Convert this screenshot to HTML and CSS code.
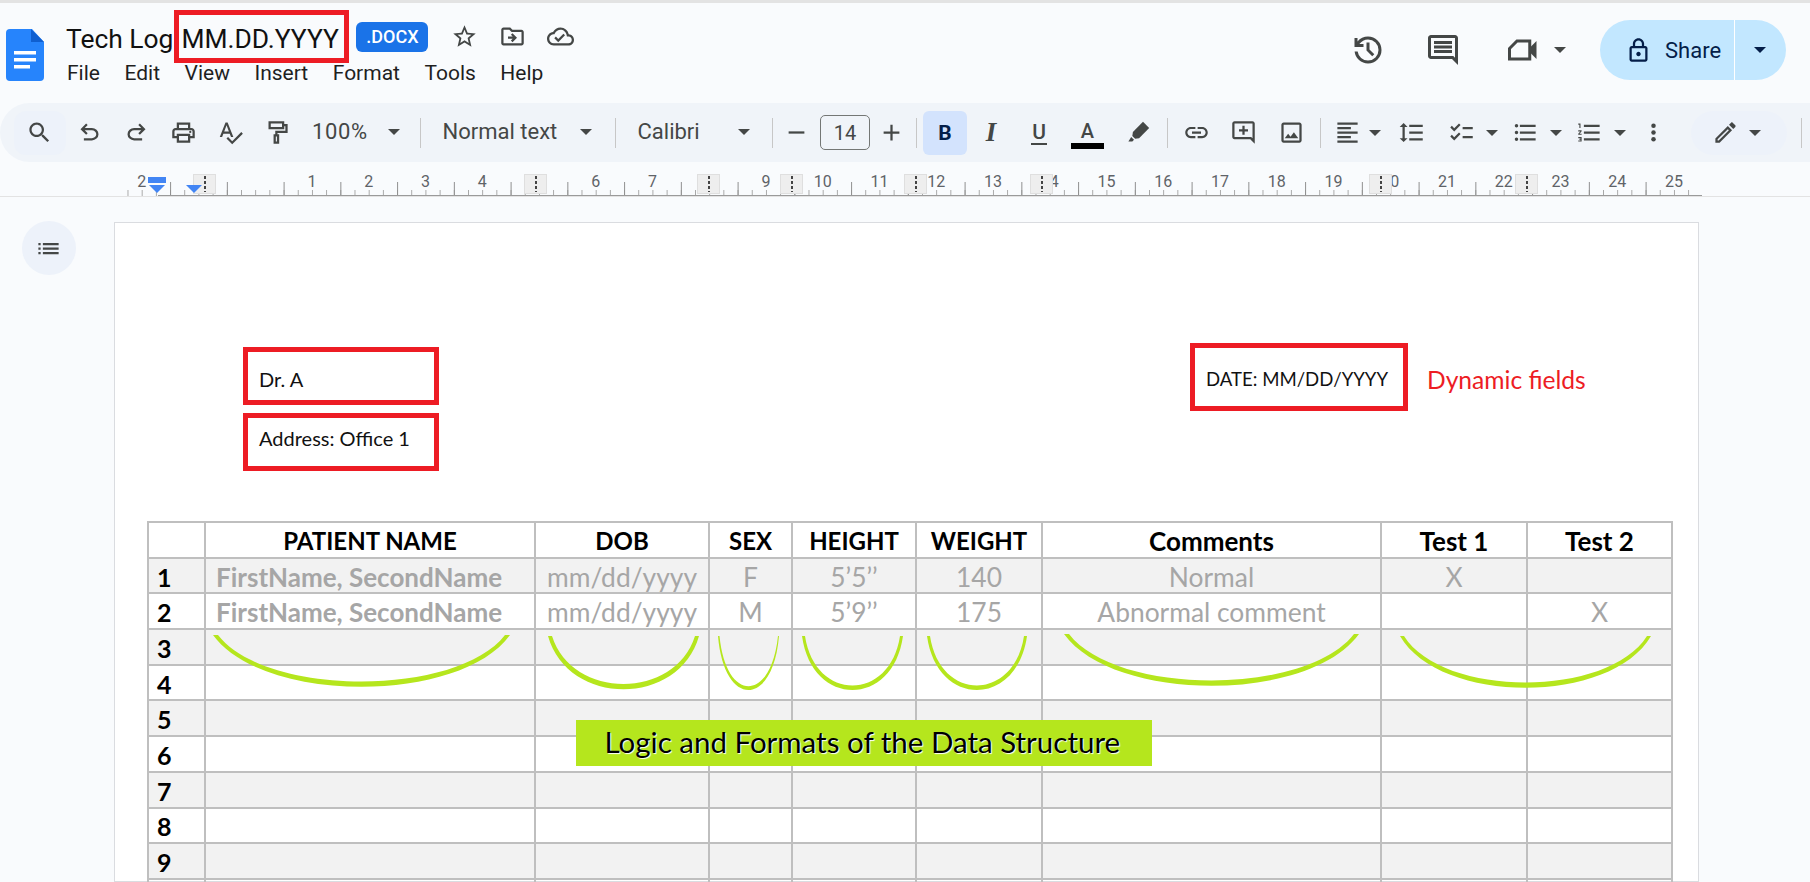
FILE: index.html
```html
<!DOCTYPE html>
<html lang="en">
<head>
<meta charset="utf-8">
<title>Tech Log MM.DD.YYYY</title>
<link rel="stylesheet" href="styles.css">
</head>
<body>
<header class="appbar">
  <svg class="logo" viewBox="0 0 38 52"><path fill="#2684fc" d="M4 0h22l12 13v35a4 4 0 0 1-4 4H4a4 4 0 0 1-4-4V4a4 4 0 0 1 4-4z"/><path fill="#0f5fd0" d="M25 0l13 13H25z"/><path fill="#fff" d="M8 22h22v3.4H8zM8 29h22v3.4H8zM8 36h16v3.4H8z"/></svg>
  <div class="titlecol">
    <div class="titlerow">
      <span class="doctitle">Tech Log</span>
      <span class="doctitle datebox">MM.DD.YYYY</span>
      <span class="badge">.DOCX</span>
      <svg class="ic star" viewBox="0 0 24 24"><path d="M22 9.24l-7.19-.62L12 2 9.19 8.63 2 9.24l5.46 4.73L5.82 21 12 17.27 18.18 21l-1.63-7.03L22 9.24zM12 15.4l-3.76 2.27 1-4.28-3.32-2.88 4.38-.38L12 6.1l1.71 4.04 4.38.38-3.32 2.88 1 4.28L12 15.4z"/></svg>
      <svg class="ic folder" viewBox="0 0 24 24"><path d="M20 6h-8l-2-2H4c-1.1 0-1.99.9-1.99 2L2 18c0 1.1.9 2 2 2h16c1.1 0 2-.9 2-2V8c0-1.1-.9-2-2-2zm0 12H4V6h5.17l2 2H20v10z"/><path d="M12.16 12H8v2h4.16l-1.58 1.59L12 17l4-4-4-4-1.41 1.41z"/></svg>
      <svg class="ic cloud" viewBox="0 0 24 24"><path d="M19.35 10.04C18.67 6.59 15.64 4 12 4 9.11 4 6.6 5.64 5.35 8.04 2.34 8.36 0 10.91 0 14c0 3.31 2.69 6 6 6h13c2.76 0 5-2.24 5-5 0-2.64-2.05-4.78-4.65-4.96zM19 18H6c-2.21 0-4-1.79-4-4 0-2.05 1.53-3.76 3.56-3.97l1.07-.11.5-.95C8.08 7.14 9.94 6 12 6c2.62 0 4.88 1.86 5.39 4.43l.3 1.5 1.53.11c1.56.1 2.78 1.41 2.78 2.96 0 1.65-1.35 3-3 3zm-9-3.82l-2.09-2.09L6.5 13.5 10 17l6.01-6.01-1.41-1.41z"/></svg>
    </div>
    <nav class="menu">
      <span>File</span><span>Edit</span><span>View</span><span>Insert</span><span>Format</span><span>Tools</span><span>Help</span>
    </nav>
  </div>
  <div class="actions">
    <svg class="ic big" viewBox="0 0 24 24"><path d="M12 21q-3.45 0-6.01-2.29Q3.43 16.43 3.08 13H5.1q.35 2.6 2.31 4.3Q9.38 19 12 19q2.92 0 4.96-2.04T19 12q0-2.92-2.04-4.96T12 5q-1.72 0-3.22.8T6.25 8H9v2H3V4h2v2.35q1.27-1.6 3.11-2.47Q9.95 3 12 3q3.75 0 6.38 2.62T21 12q0 3.75-2.62 6.38T12 21zm2.8-4.8L11 12.4V7h2v4.6l3.2 3.2z"/></svg>
    <svg class="ic big comment" viewBox="0 0 24 24"><path d="M21.99 4c0-1.1-.89-2-1.99-2H4c-1.1 0-2 .9-2 2v12c0 1.1.9 2 2 2h14l4 4-.01-18zM20 4v13.17L18.83 16H4V4h16zM6 12h12v2H6zm0-3h12v2H6zm0-3h12v2H6z"/></svg>
    <svg class="ic big video" viewBox="0 0 24 24"><path class="line" d="M8 6h8.500v12H3V11z"/><path d="M16 11l5-5v12l-5-5z"/></svg>
    <i class="caret videocaret"></i>
    <div class="share">
      <div class="sharemain">
        <svg class="ic lock" viewBox="0 0 24 24"><path d="M18 8h-1V6c0-2.76-2.24-5-5-5S7 3.24 7 6v2H6c-1.1 0-2 .9-2 2v10c0 1.1.9 2 2 2h12c1.1 0 2-.9 2-2V10c0-1.1-.9-2-2-2zM9 6c0-1.66 1.34-3 3-3s3 1.34 3 3v2H9V6zm9 14H6V10h12v10zm-6-3c1.1 0 2-.9 2-2s-.9-2-2-2-2 .9-2 2 .9 2 2 2z"/></svg>
        <span>Share</span>
      </div>
      <div class="sharedrop"><i class="caret dark"></i></div>
    </div>
  </div>
</header>

<div class="toolbar">
  <div class="cell search"><svg class="ic" viewBox="0 0 24 24"><path d="M15.5 14h-.79l-.28-.27C15.41 12.59 16 11.11 16 9.5 16 5.91 13.09 3 9.5 3S3 5.91 3 9.5 5.91 16 9.5 16c1.61 0 3.09-.59 4.23-1.57l.27.28v.79l5 4.99L20.49 19l-4.99-5zm-6 0C7.01 14 5 11.99 5 9.5S7.01 5 9.5 5 14 7.01 14 9.5 11.99 14 9.5 14z"/></svg></div>
  <div class="cell w47"><svg class="ic" viewBox="0 0 24 24"><path d="M7 19v-2h7.1q1.57 0 2.735-1T18 13.5q0-1.5-1.165-2.5T14.1 10H7.8l2.6 2.6L9 14 4 9l5-5 1.4 1.4L7.8 8h6.3q2.43 0 4.16 1.58T20 13.5q0 2.35-1.74 3.93T14.1 19z"/></svg></div>
  <div class="cell w47"><svg class="ic flip" viewBox="0 0 24 24"><path d="M7 19v-2h7.1q1.57 0 2.735-1T18 13.5q0-1.5-1.165-2.5T14.1 10H7.8l2.6 2.6L9 14 4 9l5-5 1.4 1.4L7.8 8h6.3q2.43 0 4.16 1.58T20 13.5q0 2.35-1.74 3.93T14.1 19z"/></svg></div>
  <div class="cell w47"><svg class="ic" viewBox="0 0 24 24"><path d="M19 8h-1V3H6v5H5c-1.66 0-3 1.34-3 3v6h4v4h12v-4h4v-6c0-1.66-1.34-3-3-3zM8 5h8v3H8V5zm8 12v2H8v-4h8v2zm2-2v-2H6v2H4v-4c0-.55.45-1 1-1h14c.55 0 1 .45 1 1v4h-2z"/><circle cx="18" cy="11.5" r="1"/></svg></div>
  <div class="cell w47"><svg class="ic" viewBox="0 0 24 24"><path d="M12.45 16h2.09L9.43 3H7.57L2.46 16h2.09l1.12-3h5.64l1.14 3zm-6.02-5L8.5 5.48 10.57 11H6.43zm15.16.59l-8.09 8.09L9.83 16l-1.41 1.41 5.09 5.09L23 13l-1.41-1.41z"/></svg></div>
  <div class="cell w47"><svg class="ic" viewBox="0 0 24 24"><path class="line" d="M5 3h12v5H5zM17 5.500h3v6h-9v3M9.500 14.500h3V21h-3z"/></svg></div>
  <div class="select selzoom"><span class="wide">100%</span><i class="caret"></i></div>
  <i class="sep"></i>
  <div class="select selstyle"><span>Normal text</span><i class="caret"></i></div>
  <i class="sep"></i>
  <div class="select selfont"><span>Calibri</span><i class="caret"></i></div>
  <i class="sep"></i>
  <div class="cell w47"><svg class="ic" viewBox="0 0 24 24"><path d="M5 11h14v2H5z"/></svg></div>
  <div class="sizebox">14</div>
  <div class="cell w42"><svg class="ic" viewBox="0 0 24 24"><path d="M19 13h-6v6h-2v-6H5v-2h6V5h2v6h6z"/></svg></div>
  <i class="sep sepwide"></i>
  <div class="cell bold">B</div>
  <div class="cell w48 italic">I</div>
  <div class="cell w48"><span class="under">U</span></div>
  <div class="cell w49"><span class="color">A</span></div>
  <div class="cell w52"><svg class="ic" viewBox="0 0 24 24"><path d="M16 2.500l5.500 5.500-9 9-3.500.5-2.500-2.500.5-3.500z"/><path d="M5.500 16l2.500 2.500L6.500 20H3z"/></svg></div>
  <i class="sep sepsmall"></i>
  <div class="cell w56"><svg class="ic" viewBox="0 0 24 24"><path d="M3.900 12c0-1.710 1.390-3.100 3.100-3.100h4V7H7c-2.760 0-5 2.240-5 5s2.240 5 5 5h4v-1.900H7c-1.710 0-3.100-1.390-3.100-3.100zM8 13h8v-2H8v2zm9-6h-4v1.900h4c1.710 0 3.100 1.390 3.100 3.100s-1.390 3.100-3.100 3.100h-4V17h4c2.760 0 5-2.240 5-5s-2.240-5-5-5z"/></svg></div>
  <div class="cell w38"><svg class="ic" viewBox="0 0 24 24"><path d="M22 4c0-1.100-.9-2-2-2H4c-1.100 0-2 .9-2 2v12c0 1.100.9 2 2 2h14l4 4V4zm-2 0v13.170L18.830 16H4V4h16zM13 6h-2v3H8v2h3v3h2v-3h3V9h-3z"/></svg></div>
  <div class="cell w58"><svg class="ic" viewBox="0 0 24 24"><path d="M19 5v14H5V5h14m0-2H5c-1.100 0-2 .9-2 2v14c0 1.100.9 2 2 2h14c1.100 0 2-.9 2-2V5c0-1.100-.9-2-2-2zm-4.860 8.860l-3 3.870L9 13.140 6 17h12l-3.860-5.140z"/></svg></div>
  <i class="sep"></i>
  <div class="combo tight ml12"><svg class="ic" viewBox="0 0 24 24"><path d="M15 15H3v2h12v-2zm0-8H3v2h12V7zM3 13h18v-2H3v2zm0 8h18v-2H3v2zM3 3v2h18V3H3z"/></svg><i class="caret"></i></div>
  <div class="combo ml18"><svg class="ic" viewBox="0 0 24 24"><path d="M6 7h2.500L5 3.500 1.500 7H4v10H1.500L5 20.500 8.500 17H6V7zm4-2v2h12V5H10zm0 14h12v-2H10v2zm0-6h12v-2H10v2z"/></svg></div>
  <div class="combo ml23"><svg class="ic" viewBox="0 0 24 24"><path d="M22 7h-9v2h9V7zm0 8h-9v2h9v-2zM5.540 11L2 7.460l1.410-1.410 2.120 2.120 4.240-4.240 1.410 1.410L5.540 11zm0 8L2 15.460l1.410-1.410 2.120 2.120 4.240-4.240 1.410 1.410L5.540 19z"/></svg><i class="caret"></i></div>
  <div class="combo ml14"><svg class="ic" viewBox="0 0 24 24"><path d="M4 10.500c-.83 0-1.500.67-1.500 1.500s.67 1.500 1.500 1.500 1.500-.67 1.500-1.500-.67-1.500-1.500-1.500zm0-6c-.83 0-1.500.67-1.500 1.500S3.170 7.500 4 7.500 5.500 6.830 5.500 6 4.830 4.500 4 4.500zm0 12c-.83 0-1.500.68-1.500 1.500s.68 1.500 1.500 1.500 1.500-.68 1.500-1.500-.67-1.500-1.500-1.500zM7 19h14v-2H7v2zm0-6h14v-2H7v2zm0-8v2h14V5H7z"/></svg><i class="caret"></i></div>
  <div class="combo ml14"><svg class="ic" viewBox="0 0 24 24"><path d="M2 17h2v.5H3v1h1v.5H2v1h3v-4H2v1zm1-9h1V4H2v1h1v3zm-1 3h1.800L2 13.100v.9h3v-1H3.200L5 10.900V10H2v1zm5-6v2h14V5H7zm0 14h14v-2H7v2zm0-6h14v-2H7v2z"/></svg><i class="caret"></i></div>
  <div class="combo ml14"><svg class="ic" viewBox="0 0 24 24"><circle cx="12" cy="6" r="2"/><circle cx="12" cy="12" r="2"/><circle cx="12" cy="18" r="2"/></svg></div>
  <div class="penpill"><svg class="ic" viewBox="0 0 24 24"><path d="M3 17.250V21h3.750L17.810 9.940l-3.750-3.750L3 17.250zM5.920 19H5v-.92l9.060-9.060.92.92L5.920 19zM20.710 5.630l-2.340-2.340c-.39-.39-1.020-.39-1.410 0l-1.830 1.830 3.750 3.750 1.830-1.830c.39-.39.39-1.020 0-1.410z"/></svg><i class="caret"></i></div>
  <i class="sep seplast"></i>
</div>

<div class="ruler">
  <div class="ticks"></div>
  <div class="labels">
    <span>2</span><span>1</span><span></span><span>1</span><span>2</span><span>3</span><span>4</span><span>5</span><span>6</span><span>7</span><span>8</span><span>9</span><span>10</span><span>11</span><span>12</span><span>13</span><span>14</span><span>15</span><span>16</span><span>17</span><span>18</span><span>19</span><span>20</span><span>21</span><span>22</span><span>23</span><span>24</span><span>25</span>
  </div>
  <i class="marker m1"></i><i class="marker m2"></i><i class="marker m3"></i><i class="marker m4"></i><i class="marker m5"></i><i class="marker m6"></i><i class="marker m7"></i><i class="marker m8"></i>
  <i class="indent-bar"></i>
  <i class="indent-tri tri1"></i>
  <i class="indent-tri tri2"></i>
</div>

<main class="workspace">
  <aside class="side">
    <div class="outline"><svg class="ic" viewBox="0 0 24 24"><path d="M3 7h2v2H3zM7 7h14v2H7zM3 11h2v2H3zM7 11h14v2H7zM3 15h2v2H3zM7 15h14v2H7z"/></svg></div>
  </aside>
  <section class="page">
    <div class="dochead">
      <div class="stack">
        <div class="redbox boxlow">Dr. A</div>
        <div class="redbox boxhigh">Address: Office 1</div>
      </div>
      <div class="dategroup">
        <div class="redbox datefield">DATE: MM/DD/YYYY</div>
        <div class="dynamic">Dynamic fields</div>
      </div>
    </div>
    <table class="sheet">
      <colgroup><col class="c0"><col class="c1"><col class="c2"><col class="c3"><col class="c4"><col class="c5"><col class="c6"><col class="c7"><col class="c8"></colgroup>
      <thead>
        <tr><th></th><th>PATIENT NAME</th><th>DOB</th><th>SEX</th><th>HEIGHT</th><th>WEIGHT</th><th class="mix">Comments</th><th class="mix">Test 1</th><th class="mix">Test 2</th></tr>
      </thead>
      <tbody>
        <tr><th>1</th><td class="name">FirstName, SecondName</td><td>mm/dd/yyyy</td><td>F</td><td>5’5’’</td><td>140</td><td>Normal</td><td>X</td><td></td></tr>
        <tr><th>2</th><td class="name">FirstName, SecondName</td><td>mm/dd/yyyy</td><td>M</td><td>5’9’’</td><td>175</td><td>Abnormal comment</td><td></td><td>X</td></tr>
        <tr><th>3</th><td></td><td></td><td></td><td></td><td></td><td></td><td></td><td></td></tr>
        <tr><th>4</th><td></td><td></td><td></td><td></td><td></td><td></td><td></td><td></td></tr>
        <tr><th>5</th><td></td><td></td><td></td><td></td><td></td><td></td><td></td><td></td></tr>
        <tr><th>6</th><td></td><td></td><td></td><td></td><td></td><td></td><td></td><td></td></tr>
        <tr><th>7</th><td></td><td></td><td></td><td></td><td></td><td></td><td></td><td></td></tr>
        <tr><th>8</th><td></td><td></td><td></td><td></td><td></td><td></td><td></td><td></td></tr>
        <tr><th>9</th><td></td><td></td><td></td><td></td><td></td><td></td><td></td><td></td></tr>
        <tr><th>10</th><td></td><td></td><td></td><td></td><td></td><td></td><td></td><td></td></tr>
      </tbody>
    </table>
    <svg class="arcs" viewBox="115 223 1583 659">
      <path d="M213 635C263 704 460 704 510 635H505C457 697 266 697 218 635Z"/>
      <path d="M548 636C568 707 679 707 699 636H695C675 700 572 700 552 636Z"/>
      <path d="M718 636C724 708 773 708 779 636H778C771 703 726 703 719.500 636Z"/>
      <path d="M802 636C812 708 893 708 903 636H900C890 702 815 702 805 636Z"/>
      <path d="M927 636C937 708 1017 708 1027 636H1024C1014 702 940 702 930 636Z"/>
      <path d="M1064 634C1114 703 1309 703 1359 634H1354C1306 696 1117 696 1069 634Z"/>
      <path d="M1400 636C1440 705 1611 705 1651 636H1647C1608 698 1443 698 1404 636Z"/>
    </svg>
    <div class="banner">Logic and Formats of the Data Structure</div>
  </section>
</main>
</body>
</html>
```

FILE: styles.css
```css
* { box-sizing: border-box; }
html, body { height: 100%; }
body {
  margin: 0;
  height: 882px;
  overflow: hidden;
  background: #f9fbfd;
  color: #1f1f1f;
  font-family: Roboto, "Noto Sans", sans-serif;
  display: flex;
  flex-direction: column;
  border-top: 3px solid #e3e3e3;
}
i { display: block; font-style: normal; }

.ic { width: 27px; height: 27px; fill: #444746; flex: none; display: block; }
.ic .line { fill: none; stroke: #444746; stroke-width: 2; }
.flip { transform: scaleX(-1); }
.caret {
  flex: none;
  width: 0;
  height: 0;
  border-left: 6px solid transparent;
  border-right: 6px solid transparent;
  border-top: 6px solid #444746;
}
.caret.dark { border-top-color: #041e49; }

/* App bar */
.appbar { height: 100px; flex: none; display: flex; position: relative; }
.logo { width: 38px; height: 52px; margin: 26px 0 0 6px; flex: none; }
.titlecol { margin-left: 22px; flex: none; }
.titlerow { display: flex; align-items: center; height: 53px; margin-top: 7px; }
.doctitle { font-size: 26.4px; color: #111; white-space: nowrap; padding-top: 4px; }
.datebox {
  border: 5px solid #ed1c24;
  height: 53px;
  width: 175px;
  margin-left: 1px;
  display: flex;
  align-items: center;
  padding-left: 2px;
}
.badge {
  margin-left: 7px;
  width: 72px;
  height: 30px;
  border-radius: 6px;
  background: #1a73e8;
  color: #fff;
  font-size: 18px;
  font-weight: 500;
  display: flex;
  align-items: center;
  justify-content: center;
}
.star { margin-left: 22.5px; }
.folder { margin-left: 21px; }
.cloud { margin-left: 21px; }
.menu { display: flex; gap: 24.5px; font-size: 21px; margin-top: -2px; padding-left: 1px; line-height: 24px; }
.actions { margin-left: auto; display: flex; align-items: center; height: 60px; margin-top: 17px; padding-right: 24px; }
.big { width: 36px; height: 36px; }
.comment { margin-left: 39px; }
.video { margin-left: 44px; }
.videocaret { margin-left: 13px; }
.share { display: flex; height: 60px; width: 186px; margin-left: 34px; background: #c2e7ff; border-radius: 30px; color: #041e49; font-size: 22px; }
.sharemain { width: 135px; display: flex; align-items: center; padding-left: 25px; gap: 13px; border-right: 1px solid #fff; }
.lock { fill: #041e49; }
.sharedrop { flex: 1; display: flex; align-items: center; padding-left: 19px; }

/* Toolbar */
.toolbar {
  height: 59px;
  flex: none;
  background: #f0f4f9;
  border-radius: 30px 0 0 30px;
  display: flex;
  align-items: center;
  padding-left: 14px;
  color: #444746;
}
.cell { flex: none; height: 44px; display: flex; align-items: center; justify-content: center; }
.search { width: 51.5px; background: #edf2fa; border-radius: 12px; }
.w38 { width: 38px; }
.w42 { width: 42px; }
.w47 { width: 47px; }
.w48 { width: 48px; }
.w49 { width: 49px; }
.w52 { width: 52px; }
.w56 { width: 56px; }
.w58 { width: 58px; }
.select { flex: none; display: flex; align-items: center; justify-content: space-between; font-size: 22px; line-height: 24px; padding-bottom: 2px; }
.wide { letter-spacing: 0.6px; font-size: 22px; }
.selzoom { width: 119.5px; padding-left: 11.5px; padding-right: 20px; }
.selstyle { width: 194px; padding-left: 21.5px; padding-right: 23px; }
.selfont { width: 156px; padding-left: 21.5px; padding-right: 22px; }
.sep { width: 1px; height: 30px; background: #c7c7c7; flex: none; }
.sepwide { margin: 0 6px 0 4px; }
.sepsmall { margin-left: 3px; }
.seplast { margin-left: 14px; }
.sizebox {
  flex: none;
  width: 50px;
  height: 35px;
  border: 1px solid #747775;
  border-radius: 5px;
  font-size: 20px;
  display: flex;
  align-items: center;
  justify-content: center;
}
.bold { width: 44px; background: #d3e3fd; border-radius: 6px; font-size: 21px; font-weight: 700; color: #041e49; }
.italic { font-family: "Liberation Serif", serif; font-style: italic; font-weight: 700; font-size: 27px; }
.under { font-size: 21px; font-weight: 500; border-bottom: 2px solid #444746; line-height: 22px; padding: 0 1px; }
.color { font-size: 20px; font-weight: 500; width: 33px; text-align: center; line-height: 24px; border-bottom: 6px solid #000; margin-top: 2px; }
.combo { display: flex; align-items: center; gap: 11px; flex: none; }
.combo.tight { gap: 8px; }
.ml12 { margin-left: 12.5px; }
.ml14 { margin-left: 14px; }
.ml18 { margin-left: 17.5px; }
.ml23 { margin-left: 23px; }
.penpill {
  flex: none;
  width: 96px;
  height: 44px;
  margin-left: 23.5px;
  border-radius: 22px;
  background: #edf2fa;
  display: flex;
  align-items: center;
  gap: 10px;
  padding-left: 21px;
}

/* Ruler */
.ruler { height: 35px; flex: none; position: relative; border-bottom: 1px solid #e3e3e3; }
.ticks {
  position: absolute;
  left: 115px;
  width: 1587px;
  bottom: 0;
  height: 14px;
  background-image:
    linear-gradient(to right, #8f8f8f 1px, transparent 1px),
    linear-gradient(to right, #a6a6a6 1px, transparent 1px);
  background-size: 56.75px 14px, 14.19px 6px;
  background-position: 55.1px bottom, 12.5px bottom;
  background-repeat: repeat-x;
}
.ticks::after { content: ""; position: absolute; left: 43px; right: 0; bottom: 0; height: 1px; background: #9a9a9a; }
.labels { display: flex; padding-left: 113.4px; font-size: 16px; color: #5f6368; line-height: 40px; height: 34px; position: relative; }
.labels span { flex: none; width: 56.75px; text-align: center; }
.indent-bar { position: absolute; left: 148px; top: 15px; width: 18px; height: 6px; background: #4285f4; }
.indent-tri {
  position: absolute;
  top: 23px;
  width: 0;
  height: 0;
  border-left: 8px solid transparent;
  border-right: 8px solid transparent;
  border-top: 8px solid #4285f4;
}
.tri1 { left: 149px; }
.tri2 { left: 186px; }
.marker {
  position: absolute;
  top: 12px;
  width: 23px;
  height: 20px;
  background: #eeeeee;
  border: 1px solid #dfdfdf;
}
.marker::after {
  content: "";
  position: absolute;
  left: 10px;
  top: 1px;
  width: 1.5px;
  height: 16px;
  background: repeating-linear-gradient(to bottom, #444 0 3px, transparent 3px 5px);
}
.m1 { left: 193px; }
.m2 { left: 524px; }
.m3 { left: 697px; }
.m4 { left: 780px; }
.m5 { left: 904px; }
.m6 { left: 1030px; }
.m7 { left: 1369px; }
.m8 { left: 1515px; }

/* Document */
.workspace { flex: 1; display: flex; min-height: 0; overflow: hidden; }
.side { width: 114px; flex: none; padding: 24px 0 0 21.5px; }
.outline { width: 54px; height: 54px; border-radius: 50%; background: #edf2fa; display: flex; align-items: center; justify-content: center; }
.page {
  width: 1585px;
  flex: none;
  margin-top: 25px;
  background: #fff;
  border: 1px solid #dadce0;
  position: relative;
  padding-top: 120px;
  font-family: Lato, "Open Sans", sans-serif;
  color: #111;
}
.dochead { display: flex; align-items: flex-start; padding-left: 128px; height: 128px; font-size: 20px; }
.stack { width: 196px; margin-top: 4px; display: flex; flex-direction: column; gap: 8px; }
.redbox { border: 5px solid #ed1c24; display: flex; align-items: center; padding-left: 11px; white-space: nowrap; }
.stack .redbox { height: 58px; }
.boxlow { padding-top: 6px; }
.boxhigh { padding-bottom: 8px; }
.dategroup { display: flex; margin-left: 751px; align-items: center; gap: 19px; }
.datefield { width: 218px; height: 68px; padding-left: 11px; padding-top: 3px; font-size: 18.6px; }
.dynamic { color: #ed1c24; font-size: 24.6px; white-space: nowrap; padding-top: 5px; }

.sheet {
  margin-left: 32px;
  margin-top: 50px;
  width: 1524px;
  table-layout: fixed;
  border-collapse: collapse;
  font-size: 24px;
}
.sheet tr { height: 35.7px; }
.sheet th, .sheet td { border: 2px solid #bfbfbf; padding: 2px 0 0; text-align: center; line-height: 28px; overflow: hidden; white-space: nowrap; }
.sheet th { color: #000; font-weight: 700; }
.sheet th.mix { font-size: 26px; }
.sheet td { color: #a6a6a6; font-size: 26.4px; }
.sheet tbody th { text-align: left; padding-left: 8px; font-size: 25px; }
.sheet tbody tr:nth-child(odd) th, .sheet tbody tr:nth-child(odd) td { background: #f2f2f2; }
.sheet td.name { font-weight: 700; font-size: 26px; text-align: left; padding-left: 10px; }
.c0 { width: 57px; }
.c1 { width: 330px; }
.c2 { width: 174px; }
.c3 { width: 83px; }
.c4 { width: 124px; }
.c5 { width: 126px; }
.c6 { width: 339px; }
.c7 { width: 146px; }
.c8 { width: 145px; }

.arcs { position: absolute; left: 0; top: 0; width: 1583px; height: 659px; fill: #b5e61d; pointer-events: none; }
.banner {
  position: absolute;
  left: 461px;
  top: 497px;
  width: 576px;
  height: 46px;
  background: #b5e61d;
  color: #000;
  font-size: 29.5px;
  line-height: 44px;
  padding-left: 28.5px;
  white-space: nowrap;
  text-shadow: 1px 1px 1px #fff;
}
```
